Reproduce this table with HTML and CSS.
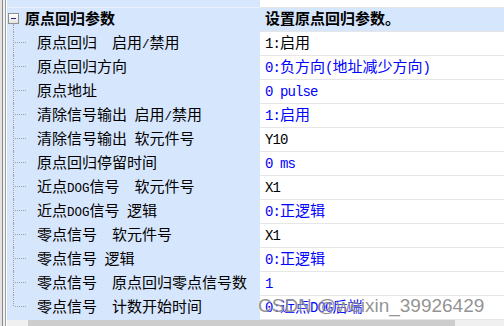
FILE: index.html
```html
<!DOCTYPE html>
<html>
<head>
<meta charset="utf-8">
<link rel="stylesheet" href="styles.css">
</head>
<body>
<div class="win">
  <div class="frame"></div>
  <div class="main">
    <div class="grid">
      <div class="row top"><div class="lab"></div><div class="val"></div></div>
      <div class="row cat">
        <div class="lab"><div class="g"><span class="box"></span></div><span class="tx t">原点回归参数</span></div>
        <div class="val b">设置原点回归参数。</div>
      </div>
      <div class="row item">
        <div class="lab"><div class="g"></div><span class="tx">原点回归<span class="s">  </span>启用<span class="s">/</span>禁用</span></div>
        <div class="val"><span class="m">1:</span>启用</div>
      </div>
      <div class="row item">
        <div class="lab"><div class="g"></div><span class="tx">原点回归方向</span></div>
        <div class="val blue"><span class="m">0:</span>负方向<span class="m">(</span>地址减少方向<span class="m">)</span></div>
      </div>
      <div class="row item">
        <div class="lab"><div class="g"></div><span class="tx">原点地址</span></div>
        <div class="val blue"><span class="m">0 pulse</span></div>
      </div>
      <div class="row item">
        <div class="lab"><div class="g"></div><span class="tx">清除信号输出<span class="s"> </span>启用<span class="s">/</span>禁用</span></div>
        <div class="val blue"><span class="m">1:</span>启用</div>
      </div>
      <div class="row item">
        <div class="lab"><div class="g"></div><span class="tx">清除信号输出<span class="s"> </span>软元件号</span></div>
        <div class="val"><span class="m">Y10</span></div>
      </div>
      <div class="row item">
        <div class="lab"><div class="g"></div><span class="tx">原点回归停留时间</span></div>
        <div class="val blue"><span class="m">0 ms</span></div>
      </div>
      <div class="row item">
        <div class="lab"><div class="g"></div><span class="tx">近点<span class="s">DOG</span>信号<span class="s">  </span>软元件号</span></div>
        <div class="val"><span class="m">X1</span></div>
      </div>
      <div class="row item">
        <div class="lab"><div class="g"></div><span class="tx">近点<span class="s">DOG</span>信号<span class="s"> </span>逻辑</span></div>
        <div class="val blue"><span class="m">0:</span>正逻辑</div>
      </div>
      <div class="row item">
        <div class="lab"><div class="g"></div><span class="tx">零点信号<span class="s">  </span>软元件号</span></div>
        <div class="val"><span class="m">X1</span></div>
      </div>
      <div class="row item">
        <div class="lab"><div class="g"></div><span class="tx">零点信号<span class="s"> </span>逻辑</span></div>
        <div class="val blue"><span class="m">0:</span>正逻辑</div>
      </div>
      <div class="row item">
        <div class="lab"><div class="g"></div><span class="tx">零点信号<span class="s">  </span>原点回归零点信号数</span></div>
        <div class="val blue"><span class="m">1</span></div>
      </div>
      <div class="row item last">
        <div class="lab"><div class="g"></div><span class="tx">零点信号<span class="s">  </span>计数开始时间</span></div>
        <div class="val blue"><span class="m">0:</span>近点<span class="m">DOG</span>后端</div>
      </div>
    </div>
    <div class="hscroll"><div class="btn"></div><div class="thumb"></div><div class="rest"></div></div>
  </div>
  <div class="wm">CSDN @weixin_39926429</div>
</div>
</body>
</html>
```

FILE: styles.css
```css
html, body {
  margin: 0;
  padding: 0;
  background: #ffffff;
}
.win {
  position: relative;
  width: 504px;
  height: 326px;
  overflow: hidden;
  display: flex;
  font-family: "Noto Sans CJK SC", sans-serif;
  font-size: 15px;
  line-height: 18px;
  color: #000000;
}
.frame {
  width: 7px;
  flex: none;
  background: linear-gradient(to right,
    #e3e3e3 0, #e3e3e3 2px,
    #8a8a8a 2px, #8a8a8a 3px,
    #f0f0f0 3px, #f0f0f0 5px,
    #a0a0a0 5px, #a0a0a0 6px,
    #ffffff 6px, #ffffff 7px);
}
.main {
  flex: 1;
  display: flex;
  flex-direction: column;
}
.grid {
  display: flex;
  flex-direction: column;
}
.row {
  display: flex;
  height: 24px;
}
.lab {
  width: 253px;
  flex: none;
  box-sizing: border-box;
  display: flex;
  align-items: flex-start;
  background: #d6e6fc;
  border-bottom: 1px solid #d6e6fc;
}
.tx {
  display: block;
  white-space: pre;
  padding-top: 1px;
}
.val {
  flex: 1;
  box-sizing: border-box;
  padding-left: 5px;
  padding-top: 1px;
  background: #ffffff;
  border-bottom: 1px solid #e6e6e6;
  white-space: pre;
}
.s {
  font-family: "Liberation Mono", monospace;
  font-size: 12.5px;
}
.m {
  font-family: "Liberation Mono", monospace;
  font-size: 14px;
  letter-spacing: -0.9px;
}
.blue {
  color: #0000ff;
}
.b {
  font-weight: bold;
}
.row.top {
  height: 8px;
}
.row.top .lab {
  border-bottom-color: #eaf1fb;
}
.row.top .val {
  border-bottom-color: #e6e6e6;
}
.row.cat .val {
  background: #d6e6fc;
}
.row.cat .t {
  font-weight: bold;
}
.g {
  position: relative;
  width: 30px;
  height: 23px;
  flex: none;
}
.row.cat .g {
  width: 18px;
}
.box {
  position: absolute;
  left: 1px;
  top: 5px;
  width: 9px;
  height: 9px;
  border: 1px solid #8e8f8f;
  background: linear-gradient(#ffffff, #e4e4e4);
}
.box::after {
  content: "";
  position: absolute;
  left: 2px;
  top: 4px;
  width: 5px;
  height: 1px;
  background: #2a2a6a;
}
.row.cat .g::after {
  content: "";
  position: absolute;
  left: 6px;
  top: 16px;
  height: 8px;
  border-left: 1px dotted #a0a0a0;
}
.row.item .g::before {
  content: "";
  position: absolute;
  left: 6px;
  top: -1px;
  height: 24px;
  border-left: 1px dotted #a0a0a0;
}
.row.item.last .g::before {
  height: 11px;
}
.row.item .g::after {
  content: "";
  position: absolute;
  left: 8px;
  top: 10px;
  width: 11px;
  border-top: 1px dotted #a0a0a0;
}
.hscroll {
  display: flex;
  height: 17px;
}
.btn {
  width: 21px;
  background: #f0f0f0;
}
.thumb {
  width: 427px;
  background: #cdcdcd;
}
.rest {
  flex: 1;
  background: #f0f0f0;
}
.wm {
  position: absolute;
  left: 258px;
  top: 294px;
  font-family: "Liberation Sans", Arial, sans-serif;
  font-size: 19px;
  line-height: 24px;
  color: rgba(110, 110, 110, 0.75);
  text-shadow: 0 0 2px rgba(255, 255, 255, 0.9);
  white-space: nowrap;
}
```
